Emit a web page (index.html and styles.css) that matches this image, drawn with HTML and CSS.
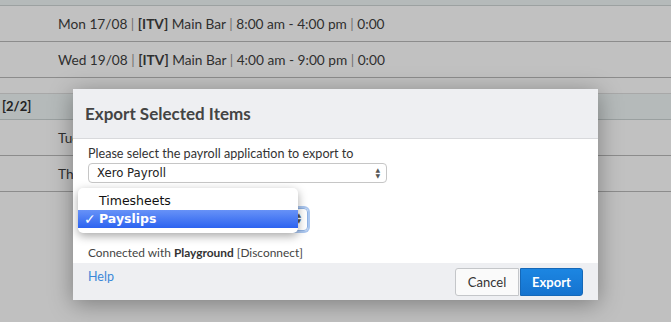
FILE: index.html
```html
<!DOCTYPE html>
<html lang="en">
<head>
  <meta charset="UTF-8" />
  <title>Export Selected Items</title>
  <link rel="stylesheet" href="styles.css">
</head>
<body>

<div class="list">
  <div class="group-head top"><span>[1/2]</span></div>
  <div class="row">Mon 17/08 <span class="sep">|</span> <b>[ITV]</b> Main Bar <span class="sep">|</span> 8:00 am - 4:00 pm <span class="sep">|</span> 0:00</div>
  <div class="row">Wed 19/08 <span class="sep">|</span> <b>[ITV]</b> Main Bar <span class="sep">|</span> 4:00 am - 9:00 pm <span class="sep">|</span> 0:00</div>
  <div class="spacer"></div>
  <div class="group-head">[2/2]</div>
  <div class="row">Tue 18/08 <span class="sep">|</span> <b>[ITV]</b> Main Bar</div>
  <div class="row">Thu 20/08 <span class="sep">|</span> <b>[ITV]</b> Main Bar</div>
</div>

<div class="modal">
  <div class="modal-head">Export Selected Items</div>
  <div class="modal-body">
    <label>Please select the payroll application to export to</label>
    <div class="select wide">Xero Payroll <span class="arrows">&#9650;<br>&#9660;</span></div>
    <div class="select narrow focused"><span class="arrows">&#9650;<br>&#9660;</span></div>
    <p class="status">Connected with <b>Playground</b> [Disconnect]</p>
  </div>
  <div class="modal-foot">
    <a href="#" class="help">Help</a>
    <div class="actions">
      <button class="btn">Cancel</button>
      <button class="btn primary">Export</button>
    </div>
  </div>
</div>

<ul class="popup">
  <li>Timesheets</li>
  <li class="chosen"><span class="check">&#10003;</span>Payslips</li>
</ul>

</body>
</html>
```

FILE: styles.css
```css
body { margin: 0; background: #c0c0c0; font-family: "Lato", "Open Sans", sans-serif; color: #2f2f2f; overflow: hidden; }

.list { background: #c1c1c1; }
.group-head { height: 25px; line-height: 25px; padding-left: 2px; font-weight: bold; font-size: 13px; background: #b5baba; border-bottom: 1px solid #9aa0a0; color: #222; }
.group-head.top { height: 5px; overflow: hidden; padding-left: 56px; border-bottom: 1px solid #9ca1a1; }
.group-head.top span { display: block; margin-top: -21px; }
.row { height: 35px; line-height: 35px; padding-left: 58px; font-size: 13.7px; border-bottom: 1px solid #8c8c8c; white-space: nowrap; }
.row b { font-weight: bold; }
.sep { color: #707070; }
.spacer { height: 15px; border-bottom: 1px solid #a8a8a8; }

.modal { position: absolute; left: 73px; top: 89px; width: 525px; height: 211px; background: #fff; box-shadow: 0 4px 22px rgba(0,0,0,0.35); display: flex; flex-direction: column; }
.modal-head { height: 49px; line-height: 49px; padding-left: 12px; background: #eeeff2; border-bottom: 1px solid #d8d9dc; font-size: 17px; font-weight: bold; color: #444; }
.modal-body { flex: 1; padding: 8px 15px 0; font-size: 11.5px; color: #333; }
.modal-body label { display: block; line-height: 14px; font-size: 12.6px; }
.select { position: relative; box-sizing: border-box; height: 20px; line-height: 18px; margin-top: 2px; padding-left: 8px; border: 1px solid #c6c6c6; border-radius: 4px; font-family: "DejaVu Sans", sans-serif; font-size: 11.7px; color: #222; }
.select.wide { width: 299px; }
.select.narrow { width: 220px; margin-top: 25px; height: 23px; }
.select.focused { border-color: #8fb2e4; box-shadow: 0 0 0 2px #aac6ef; }
.arrows { position: absolute; right: 6px; top: 3px; font-size: 6px; line-height: 6px; color: #555; }
.status { margin: 14px 0 0; font-size: 11.9px; color: #444; }
.status b { color: #333; }

.modal-foot { height: 37px; background: #eeeff2; display: flex; align-items: center; justify-content: space-between; padding: 0 15px; }
.help { color: #3a88d8; text-decoration: none; font-size: 12.5px; margin-top: -10px; }
.actions { display: flex; }
.btn { height: 28px; width: 64px; padding: 0; font-family: "Lato", sans-serif; font-size: 13px; border: 1px solid #c4c6c9; border-radius: 3px 0 0 3px; background: #fafafa; color: #333; }
.btn.primary { width: 63px; border-color: #1568b8; border-radius: 0 3px 3px 0; background: linear-gradient(#1c86e2, #1573cf); color: #fff; font-weight: bold; margin-left: 1px; }

.popup { position: absolute; left: 78px; top: 188px; width: 220px; margin: 0; padding: 4px 0 5px; list-style: none; background: #fff; border-radius: 5px; box-shadow: 0 3px 10px rgba(0,0,0,0.35); font-family: "DejaVu Sans", sans-serif; font-size: 12.5px; color: #111; }
.popup li { height: 18px; line-height: 18px; padding-left: 21px; position: relative; }
.popup li.chosen { background: linear-gradient(#6792f7, #2c63f0); color: #fff; font-weight: bold; }
.check { position: absolute; left: 6px; font-size: 14px; }
```
